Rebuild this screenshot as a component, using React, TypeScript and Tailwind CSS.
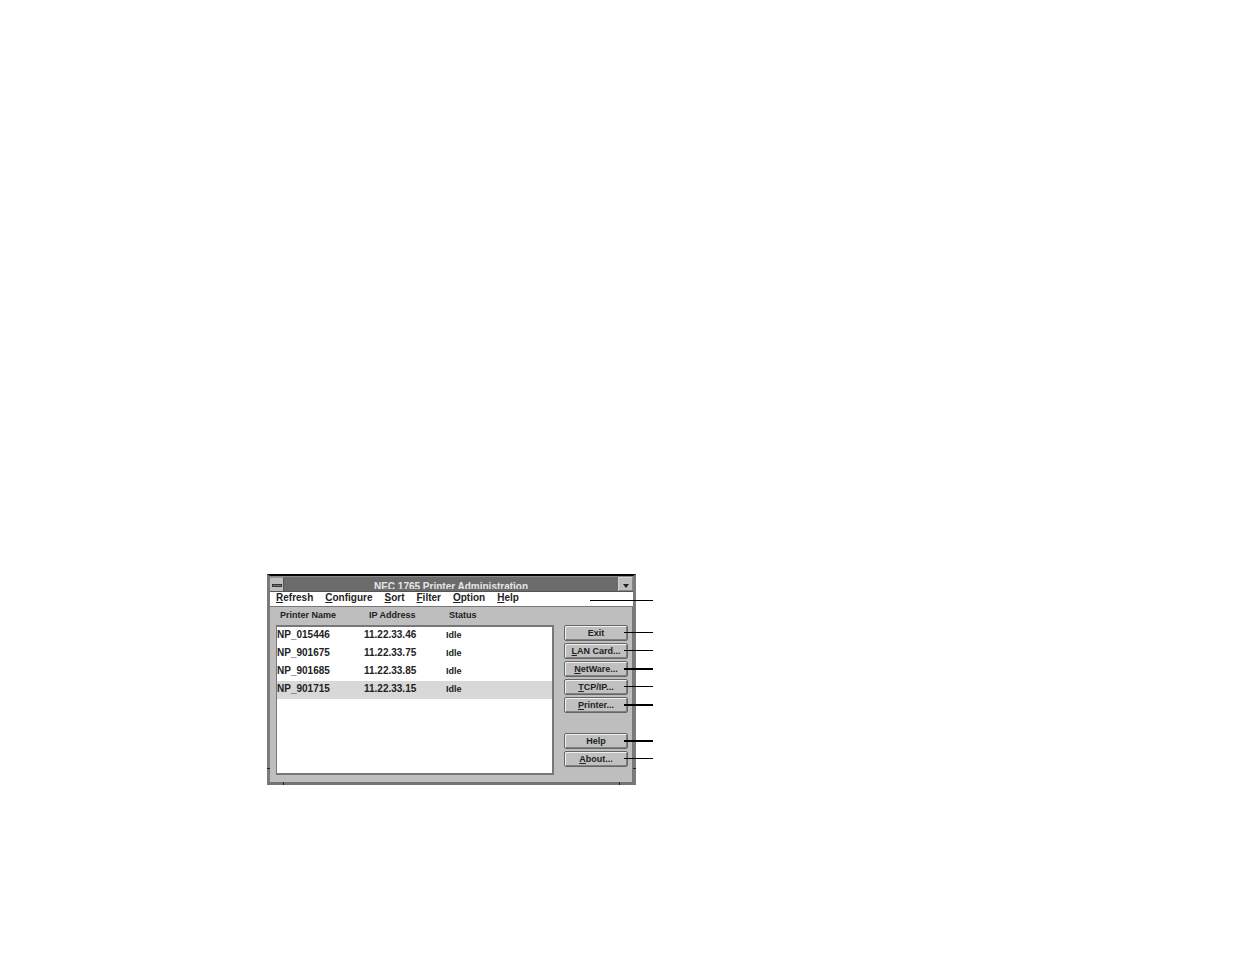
const menus = ["Refresh", "Configure", "Sort", "Filter", "Option", "Help"];

const printers = [
  { name: "NP_015446", ip: "11.22.33.46", status: "Idle" },
  { name: "NP_901675", ip: "11.22.33.75", status: "Idle" },
  { name: "NP_901685", ip: "11.22.33.85", status: "Idle" },
  { name: "NP_901715", ip: "11.22.33.15", status: "Idle", selected: true },
];

function Mnemonic({ text }: { text: string }) {
  return (
    <>
      <span className="underline underline-offset-1">{text[0]}</span>
      {text.slice(1)}
    </>
  );
}

function PushButton({ label, mnemonic = true, thick = false }: { label: string; mnemonic?: boolean; thick?: boolean }) {
  return (
    <div className="relative h-[18px]">
      <button
        type="button"
        className="flex h-4 w-full items-center justify-center rounded-xs border border-[#666] bg-[#c0c0c0] text-[9px] leading-none font-bold whitespace-nowrap text-[#222] shadow-[inset_1px_1px_0_#f0f0f0,inset_-1px_-1px_0_#808080]"
      >
        <span>{mnemonic ? <Mnemonic text={label} /> : label}</span>
      </button>
      <span className={`absolute top-[7px] left-[60px] w-[29px] bg-black ${thick ? "h-[2px]" : "h-px"}`} />
    </div>
  );
}

export default function App() {
  return (
    <main className="min-h-screen bg-white pt-[574px] pl-[267px] font-['Liberation_Sans',Arial,sans-serif] text-[#222]">
      <section className="relative w-[369px] border-x-3 border-t-2 border-b-3 border-x-[#7b7b7b] border-t-[#050505] border-b-[#747474] bg-[#bebebe]">
        <header className="flex h-[16px] border-t border-b border-t-[#8a8a8a] border-b-[#555] bg-[#6b6b6b]">
          <button
            type="button"
            aria-label="Window menu"
            className="flex w-[14px] items-center justify-center border-t border-r border-t-[#999] border-r-[#555] bg-[#bebebe] pt-px"
          >
            <span className="h-[3px] w-[10px] border border-[#333] bg-[#777]" />
          </button>
          <h1 className="h-[12px] flex-1 overflow-hidden pt-[4px] text-center text-[10px] leading-[11px] font-bold text-[#e6e6e6]">
            NEC 1765 Printer Administration
          </h1>
          <button
            type="button"
            aria-label="Minimize"
            className="flex w-[15px] items-center justify-center border border-[#d4d4d4] border-r-[#888] border-b-[#888] bg-[#bebebe] pt-[3px]"
          >
            <svg viewBox="0 0 6 4" className="h-1 w-1.5" fill="#222">
              <path d="M0 0h6L3 4z" />
            </svg>
          </button>
        </header>

        <nav className="relative flex h-[14px] items-center gap-3 bg-white pb-[2px] pl-[6px] text-[10px] leading-none font-bold">
          {menus.map((m) => (
            <button key={m} type="button">
              <Mnemonic text={m} />
            </button>
          ))}
          <span className="absolute top-2 left-[320px] h-px w-[63px] bg-black" />
        </nav>

        <div className="flex gap-[10px] border-t border-r border-[#777] pr-[4px] pb-[7px] pl-[6px]">
          <table className="block flex-1">
            <thead className="block">
              <tr className="grid h-[18px] grid-cols-[89px_80px_1fr] items-center pb-[2px] pl-[4px] text-left text-[9px] leading-none">
                <th>Printer Name</th>
                <th>IP Address</th>
                <th>Status</th>
              </tr>
            </thead>
            <tbody className="block h-[150px] border border-t-2 border-r-2 border-b-2 border-[#777] bg-white">
              {printers.map((p) => (
                <tr
                  key={p.name}
                  className={`grid h-[18px] grid-cols-[87px_82px_1fr] items-center pb-[2px] text-[10px] leading-none font-bold ${
                    p.selected ? "bg-[#d8d8d8]" : ""
                  }`}
                >
                  <td>{p.name}</td>
                  <td>{p.ip}</td>
                  <td className="text-[9px]">{p.status}</td>
                </tr>
              ))}
            </tbody>
          </table>

          <div className="w-16 pt-[18px]">
            <PushButton label="Exit" mnemonic={false} />
            <PushButton label="LAN Card..." />
            <PushButton label="NetWare..." thick />
            <PushButton label="TCP/IP..." />
            <PushButton label="Printer..." thick />
            <div className="pt-[18px]">
              <PushButton label="Help" mnemonic={false} thick />
              <PushButton label="About..." />
            </div>
          </div>
        </div>

        {/* Corner notches of the sizing frame */}
        <span className="absolute bottom-[13px] -left-[3px] h-px w-[3px] bg-[#222]" />
        <span className="absolute -right-[3px] bottom-[13px] h-px w-[3px] bg-[#222]" />
        <span className="absolute -bottom-[3px] left-[13px] h-[3px] w-px bg-[#222]" />
        <span className="absolute right-[13px] -bottom-[3px] h-[3px] w-px bg-[#222]" />
      </section>
    </main>
  );
}
